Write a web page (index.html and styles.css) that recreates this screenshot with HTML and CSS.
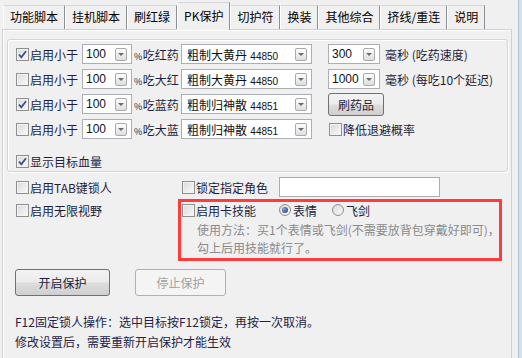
FILE: index.html
```html
<!DOCTYPE html>
<html lang="zh-CN">
<head>
  <meta charset="UTF-8">
  <title>PK保护</title>
  <link rel="stylesheet" href="styles.css">
</head>
<body>
  <div class="window">
    <div class="main">
      <div class="tabs">
        <div class="tab">功能脚本</div>
        <div class="tab">挂机脚本</div>
        <div class="tab">刷红绿</div>
        <div class="tab active">PK保护</div>
        <div class="tab">切护符</div>
        <div class="tab">换装</div>
        <div class="tab">其他综合</div>
        <div class="tab">挤线/重连</div>
        <div class="tab">说明</div>
      </div>

      <div class="pane">
        <div class="group">
          <div class="potion-grid">
            <!-- row 1 -->
            <label class="check"><span class="cb checked"><svg viewBox="0 0 11 11" width="11" height="11"><path d="M2 5.5 L4.3 8.3 L9 2.2" /></svg></span>启用小于</label>
            <div class="combo small"><span class="val">100</span><span class="drop"></span></div>
            <span class="pct"><span class="sign">%</span>吃红药</span>
            <div class="combo wide"><span class="val">粗制大黄丹 <span class="num">44850</span></span><span class="drop"></span></div>
            <div class="extra">
              <div class="combo ms"><span class="val">300</span><span class="drop"></span></div>
              <span class="unit">毫秒 (吃药速度)</span>
            </div>

            <!-- row 2 -->
            <label class="check"><span class="cb"></span>启用小于</label>
            <div class="combo small"><span class="val">100</span><span class="drop"></span></div>
            <span class="pct"><span class="sign">%</span>吃大红</span>
            <div class="combo wide"><span class="val">粗制大黄丹 <span class="num">44850</span></span><span class="drop"></span></div>
            <div class="extra">
              <div class="combo ms"><span class="val">1000</span><span class="drop"></span></div>
              <span class="unit">毫秒 (每吃10个延迟)</span>
            </div>

            <!-- row 3 -->
            <label class="check"><span class="cb checked"><svg viewBox="0 0 11 11" width="11" height="11"><path d="M2 5.5 L4.3 8.3 L9 2.2" /></svg></span>启用小于</label>
            <div class="combo small"><span class="val">100</span><span class="drop"></span></div>
            <span class="pct"><span class="sign">%</span>吃蓝药</span>
            <div class="combo wide"><span class="val">粗制归神散 <span class="num">44851</span></span><span class="drop"></span></div>
            <div class="extra">
              <button class="btn-small">刷药品</button>
            </div>

            <!-- row 4 -->
            <label class="check"><span class="cb"></span>启用小于</label>
            <div class="combo small"><span class="val">100</span><span class="drop"></span></div>
            <span class="pct"><span class="sign">%</span>吃大蓝</span>
            <div class="combo wide"><span class="val">粗制归神散 <span class="num">44851</span></span><span class="drop"></span></div>
            <div class="extra">
              <label class="check"><span class="cb"></span>降低退避概率</label>
            </div>
          </div>

          <label class="check show-hp"><span class="cb checked"><svg viewBox="0 0 11 11" width="11" height="11"><path d="M2 5.5 L4.3 8.3 L9 2.2" /></svg></span>显示目标血量</label>
        </div>

        <div class="lower">
          <div class="row-a">
            <div class="left">
              <label class="check"><span class="cb"></span>启用TAB键锁人</label>
            </div>
            <div class="right">
              <label class="check"><span class="cb"></span>锁定指定角色</label>
              <input class="lock-input" type="text">
            </div>
          </div>

          <div class="row-b">
            <div class="left">
              <label class="check"><span class="cb"></span>启用无限视野</label>
            </div>
            <div class="redbox">
              <div class="head">
                <label class="check"><span class="cb"></span>启用卡技能</label>
                <label class="radio-item first"><span class="radio on"></span>表情</label>
                <label class="radio-item"><span class="radio"></span>飞剑</label>
              </div>
              <div class="desc">使用方法：买1个表情或飞剑(不需要放背包穿戴好即可)，<br>勾上后用技能就行了。</div>
            </div>
          </div>

          <div class="actions">
            <button class="btn">开启保护</button>
            <button class="btn disabled">停止保护</button>
          </div>

          <div class="notes">
            <p>F12固定锁人操作：选中目标按F12锁定，再按一次取消。</p>
            <p>修改设置后，需要重新开启保护才能生效</p>
          </div>
        </div>
      </div>
    </div>
    <div class="edge"></div>
  </div>
</body>
</html>
```

FILE: styles.css
```css
* {
  box-sizing: border-box;
}

body {
  margin: 0;
  width: 522px;
  height: 358px;
  overflow: hidden;
  background-color: #f0f0f0;
  font-family: "Noto Sans CJK SC", sans-serif;
  font-size: 12px;
  color: #1e1e3c;
}

.window {
  display: flex;
  height: 358px;
}

.main {
  width: 518px;
  padding-left: 2px;
}

.edge {
  flex: 1;
  background-color: #d3e2f1;
  border-left: 1px solid #b4c4d4;
}

/* tab strip */
.tabs {
  display: flex;
  align-items: flex-end;
  height: 29px;
  padding-left: 1px;
}

.tab {
  height: 24px;
  line-height: 22px;
  padding: 0 6px;
  border-top: 1px solid #d6d6d6;
  border-left: 1px solid #ffffff;
  border-right: 1px solid #8b8f97;
  background-color: #f0f0f0;
  color: #000;
  white-space: nowrap;
}

.tab.active {
  height: 28px;
  line-height: 26px;
  margin-bottom: -1px;
  position: relative;
  z-index: 1;
}

/* pane */
.pane {
  width: 510px;
  height: 340px;
  border: 1px solid #cdd1d6;
  border-bottom: none;
  box-shadow: inset 1px 1px 0 #ffffff;
}

.group {
  margin: 9px 3px 0 4px;
  padding: 4px 0 2px 8px;
  border: 1px solid #d0d5da;
  border-radius: 3px;
  box-shadow: inset 1px 1px 0 #ffffff, 1px 1px 0 #ffffff;
}

.potion-grid {
  display: grid;
  grid-template-columns: 66px 50px 49px 131px 1fr;
  grid-auto-rows: 20px;
  row-gap: 5px;
  align-items: center;
}

.check {
  display: flex;
  align-items: center;
  height: 16px;
  white-space: nowrap;
}

.cb {
  width: 13px;
  height: 13px;
  margin-right: 1px;
  border: 1px solid #8e8f8f;
  background: linear-gradient(135deg, #d8d9da, #fafafa);
  box-shadow: inset 0 0 0 1px #f3f3f3;
  flex-shrink: 0;
}

.cb svg {
  display: block;
  fill: none;
  stroke: #3f4d8f;
  stroke-width: 1.8;
}

.show-hp {
  margin-top: 14px;
}

.pct {
  padding-left: 2px;
  white-space: nowrap;
}

.pct .sign {
  font-size: 9px;
  letter-spacing: -0.5px;
  margin-right: 1px;
}

.combo {
  display: flex;
  align-items: center;
  height: 20px;
  padding-left: 3px;
  border: 1px solid #abafb5;
  background-color: #fff;
  font-family: "Liberation Sans", "Noto Sans CJK SC", sans-serif;
  color: #111;
}

.combo .val {
  flex: 1;
  white-space: nowrap;
}

.combo .num {
  font-size: 10px;
}

.combo.small {
  width: 50px;
}

.combo.wide {
  width: 131px;
  padding-left: 5px;
}

.combo.ms {
  width: 52px;
}

.drop {
  display: flex;
  align-items: center;
  justify-content: center;
  width: 12px;
  height: 13px;
  margin-right: 4px;
  border: 1px solid #a9a9a9;
  border-radius: 2px;
  background: linear-gradient(#fdfdfd, #dedede);
}

.drop::after {
  content: "";
  border-left: 3px solid transparent;
  border-right: 3px solid transparent;
  border-top: 3px solid #6b6b6b;
}

.extra {
  display: flex;
  align-items: center;
  padding-left: 16px;
}

.unit {
  margin-left: 5px;
  white-space: nowrap;
}

.extra .check {
  padding-left: 1px;
}

.btn-small,
.btn {
  height: 23px;
  width: 56px;
  padding: 0;
  border: 1px solid #707070;
  border-radius: 3px;
  background: linear-gradient(#f3f3f3 0%, #ebebeb 48%, #dddddd 52%, #cfcfcf 100%);
  font-family: "Noto Sans CJK SC", sans-serif;
  font-size: 12px;
  color: #1e1e3c;
}

/* lower section */
.lower {
  padding: 5px 0 0 13px;
}

.row-a {
  display: flex;
  align-items: center;
  height: 20px;
}

.row-a .left,
.row-b .left {
  width: 162px;
}

.row-a .right {
  display: flex;
  align-items: center;
  padding-left: 4px;
}

.lock-input {
  width: 161px;
  height: 20px;
  margin: 0 0 0 11px;
  border: 1px solid #abadb3;
  background-color: #fff;
}

.row-b {
  display: flex;
  margin-top: 2px;
}

.row-b .left {
  padding-top: 3px;
}

.redbox {
  width: 324px;
  padding: 0 0 1px 1px;
  border: 3px solid #ff3b3b;
}

.head {
  display: flex;
  align-items: center;
  height: 16px;
}

.radio-item {
  display: flex;
  align-items: center;
  margin-left: 15px;
}

.radio-item.first {
  margin-left: 23px;
}

.radio {
  display: flex;
  align-items: center;
  justify-content: center;
  width: 12px;
  height: 12px;
  margin-right: 2px;
  border: 1px solid #8e8f8f;
  border-radius: 50%;
  background: linear-gradient(135deg, #d6d8da, #fbfbfb);
}

.radio.on::after {
  content: "";
  width: 6px;
  height: 6px;
  border-radius: 50%;
  background: radial-gradient(circle at 35% 35%, #8ea0d8, #1f2f78);
}

.desc {
  margin-top: 3px;
  padding-left: 15px;
  line-height: 18px;
  color: #8a8a8a;
  white-space: nowrap;
}

.actions {
  display: flex;
  gap: 25px;
  margin: 8px 0 0 -1px;
}

.btn {
  width: 95px;
  height: 27px;
}

.btn.disabled {
  width: 91px;
  border-color: #adb2b5;
  background: #f4f4f4;
  color: #a0a0a0;
}

.notes {
  margin: 16px 0 0 -1px;
  line-height: 20px;
  color: #23234a;
}

.notes p {
  margin: 0;
  white-space: nowrap;
}
```
